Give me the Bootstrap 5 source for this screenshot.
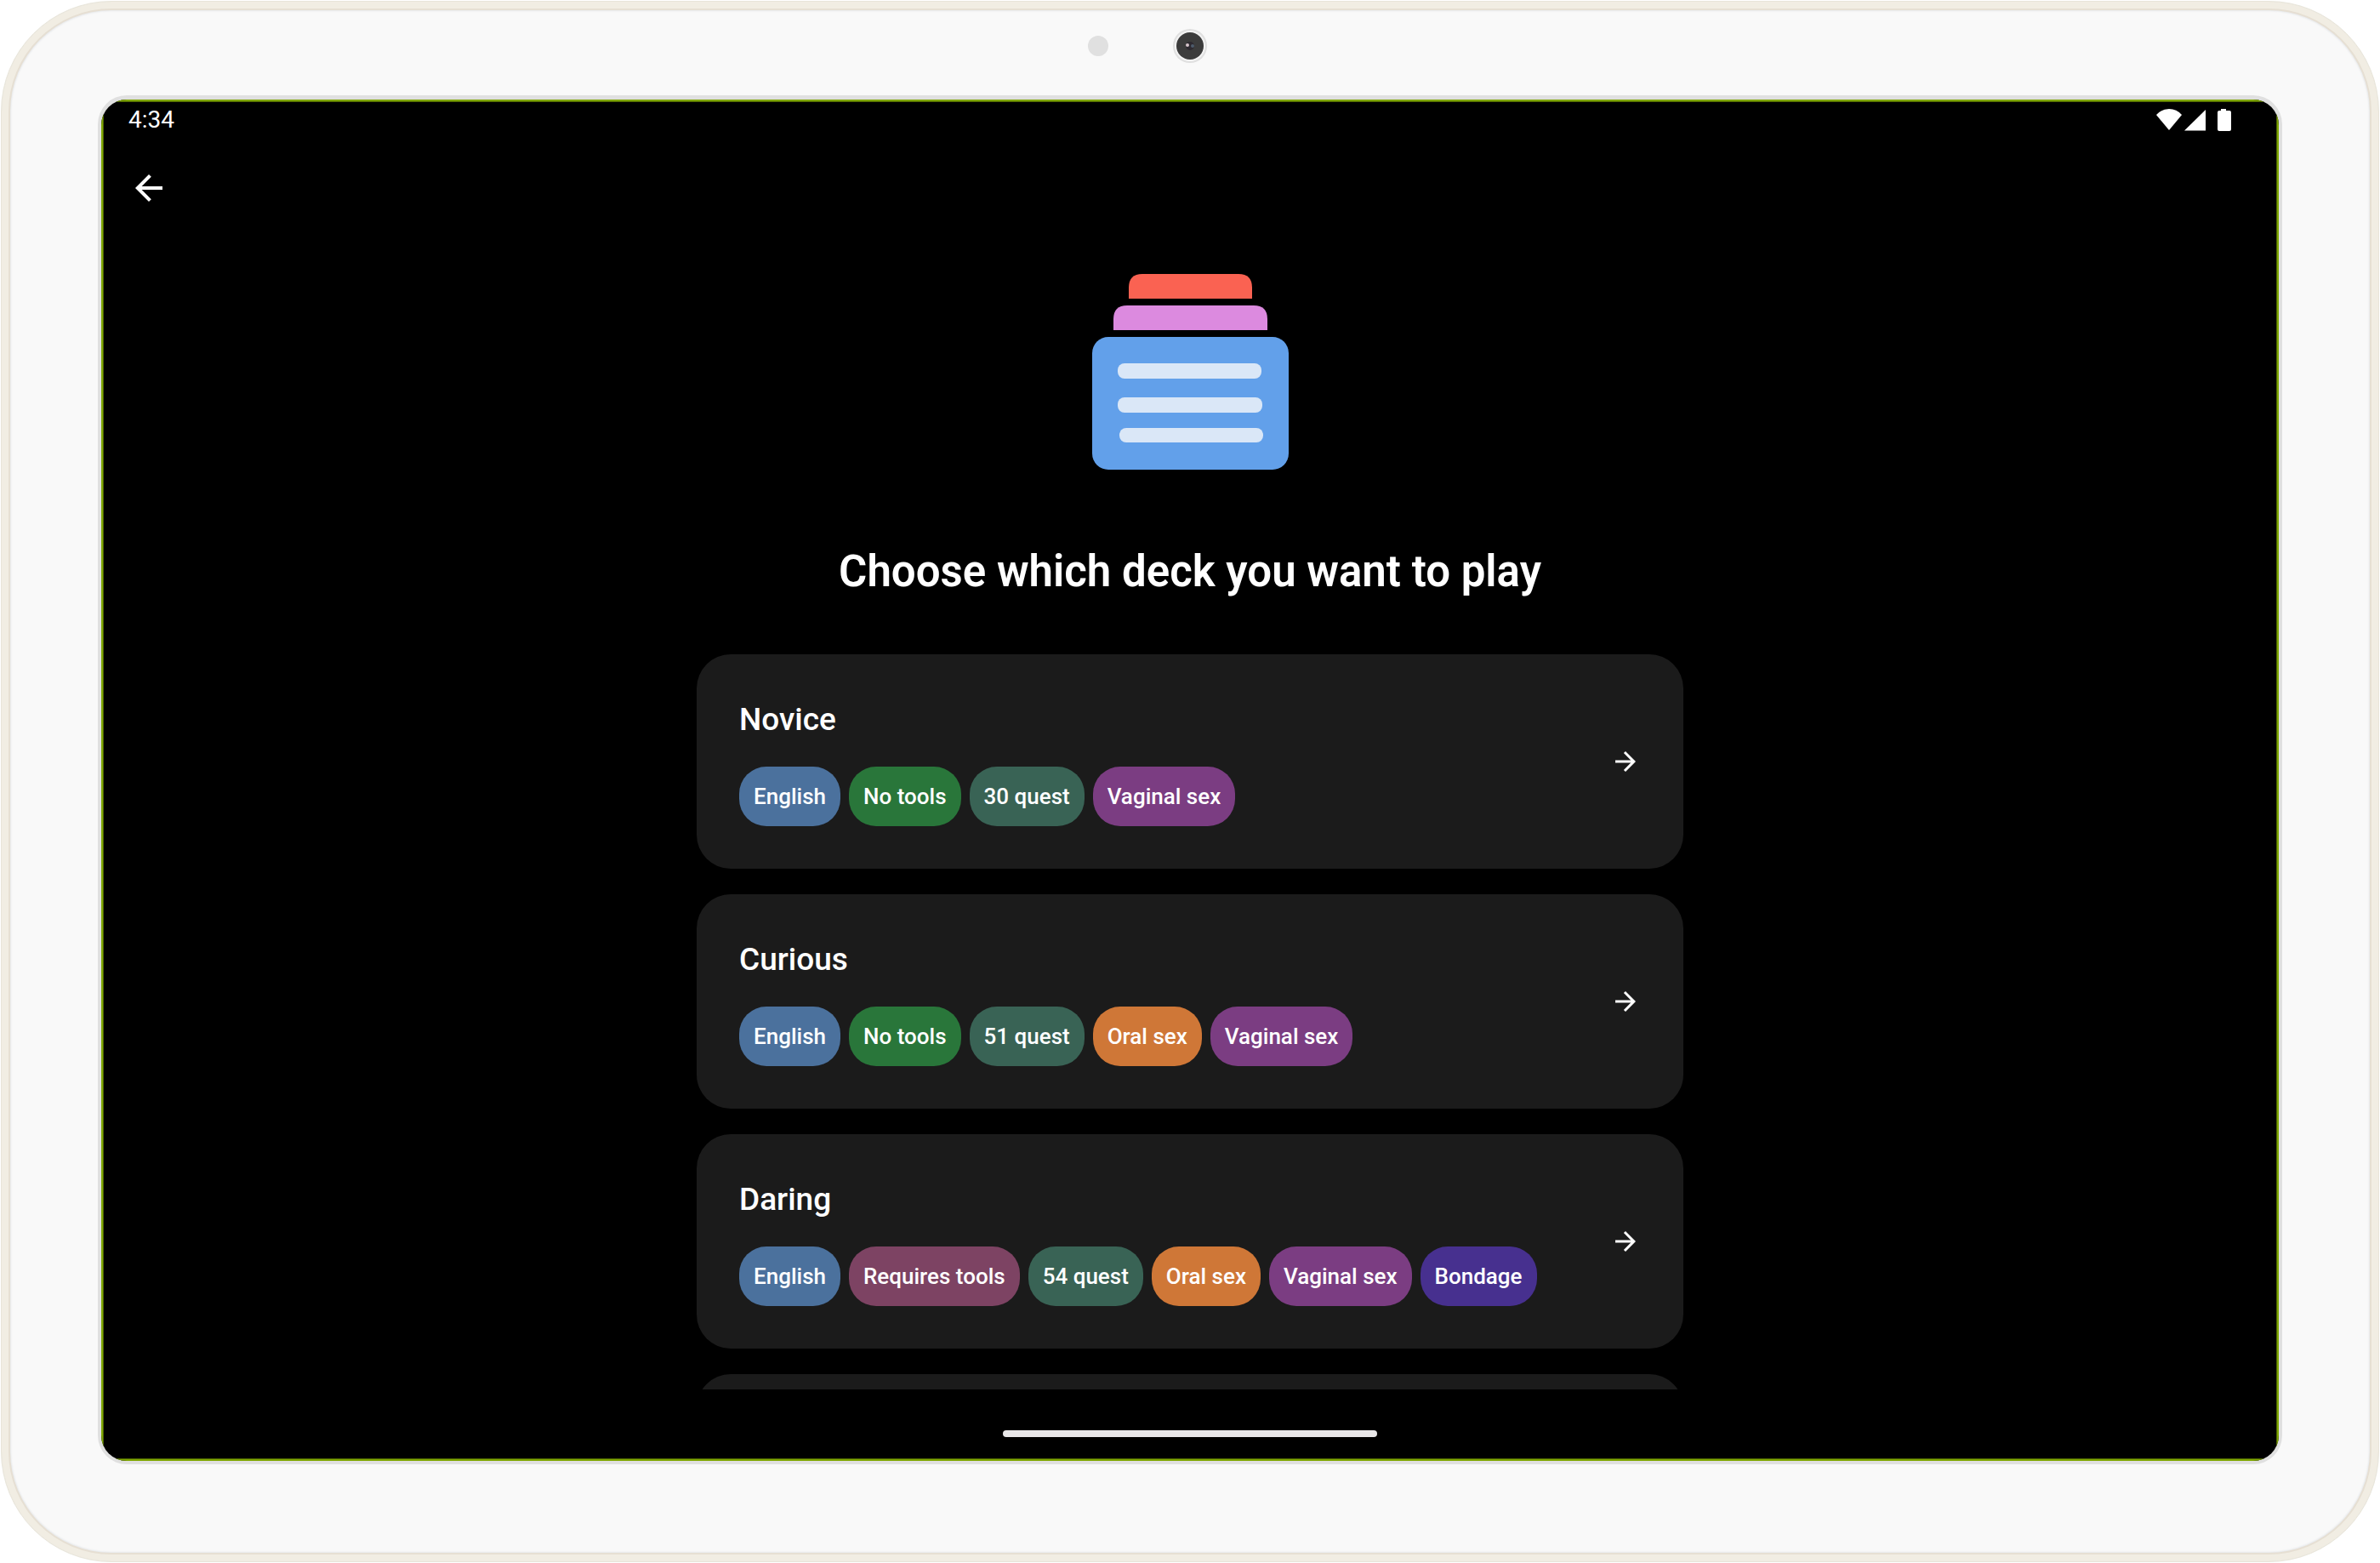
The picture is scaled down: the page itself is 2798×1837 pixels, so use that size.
<!DOCTYPE html>
<html lang="en" data-bs-theme="dark">
<head>
<meta charset="utf-8">
<meta name="viewport" content="width=device-width, initial-scale=1">
<title>Choose a deck</title>
<link href="https://cdn.jsdelivr.net/npm/bootstrap@5.3.0/dist/css/bootstrap.min.css" rel="stylesheet">
<style>
  body { background: #fff; font-family: Roboto, "Noto Sans", sans-serif; }
  .stage { height: 100vh; padding: 1px; }
  /* Tablet shell */
  .device {
    background: #f9f9f9;
    border: 1px solid #e8e5da;
    border-radius: 130px;
    padding: 10px 113px 114px;
    box-shadow: inset 0 0 0 8px #f1ede3, inset 0 0 0 10px #e6dfd3, inset 0 0 2px 11px #e6e8ea;
  }
  .sensors { height: 100px; padding-top: 20px; }
  .bezel { border: 4px solid #e0e0e0; border-top-width: 5px; border-radius: 34px; min-height: 0; background: #e0e0e0; }
  .glass { border-radius: 30px; }
  .viewport-edge { border: 2px solid #7fa600; outline: 1px solid #4c6400; outline-offset: -3px; background: #000; color: #fff; padding: 1px; min-height: 0; }
  /* System bars */
  .status { height: 50px; padding: 0 53px 0 29px; font-size: 28px; line-height: 42px; }
  .home-area { height: 81px; padding-top: 48px; }
  .home-pill { width: 440px; height: 8px; background: #e9e7e8; }
  /* App */
  .app-top { padding: 27px 29px 0; }
  .back { width: 48px; height: 48px; color: #fff; }
  .scroller { min-height: 0; overflow-y: auto; scrollbar-width: none; padding-top: 77px; }
  .scroller::-webkit-scrollbar { display: none; }
  .page-title { font-size: 51px; line-height: 60px; font-weight: 600; margin: 90px 0 67px; }
  .decks { width: 100%; max-width: 1160px; gap: 30px; }
  .deck { background: #1b1b1b; color: #fff; border-radius: 40px; padding: 50px; min-height: 252px; }
  .deck:hover { color: #fff; background: #222; }
  .deck-name { font-size: 37px; line-height: 54px; font-weight: 500; margin-bottom: 28px; }
  .tags { gap: 10px; }
  .tag { font-size: 26px; line-height: 30px; font-weight: 500; padding: 20px 17px; border-radius: 32px; }
  .tag-lang { background: #4b719d; }
  .tag-free { background: #29763a; }
  .tag-tools { background: #7d4363; }
  .tag-count { background: #396355; }
  .tag-oral { background: #cf7737; }
  .tag-vaginal { background: #7b3d82; }
  .tag-bondage { background: #47308f; }
</style>
</head>
<body>
<div class="stage">
  <div class="device h-100 d-flex flex-column">
    <div class="sensors d-flex justify-content-center flex-shrink-0">
      <svg width="260" height="44" viewBox="0 0 260 44" aria-hidden="true">
        <circle cx="22" cy="22" r="12" fill="#e0e0e0"/>
        <circle cx="130" cy="22" r="20" fill="#e0e0e0"/>
        <circle cx="130" cy="22" r="18" fill="#f3f3f3"/>
        <circle cx="130" cy="22" r="16" fill="#3c3c3c"/>
        <circle cx="130" cy="22" r="5" fill="#2e2a31"/>
        <circle cx="133" cy="22" r="2" fill="#4d5b6b"/>
        <circle cx="127" cy="21" r="2" fill="#d5c5cb"/>
      </svg>
    </div>

    <div class="bezel flex-grow-1 d-flex">
      <div class="glass flex-grow-1 d-flex overflow-hidden">
        <div class="viewport-edge flex-grow-1 d-flex flex-column">
          <div class="status d-flex justify-content-between flex-shrink-0">
            <span>4:34</span>
            <svg width="88" height="26" viewBox="0 0 88 26" class="mt-2" fill="#fff" role="img" aria-label="Wi-Fi, signal and battery">
              <path d="M0 7Q6 0 15 0T30 7L15 25Z"/>
              <path d="M33 25.500L58 1V25.500Z"/>
              <path d="M76 0h6v2h4q2 0 2 2v20q0 2-2 2H74q-2 0-2-2V4q0-2 2-2h2z"/>
            </svg>
          </div>

          <header class="app-top flex-shrink-0">
            <button type="button" class="back btn p-0 border-0 d-block" aria-label="Back">
              <svg class="d-block" width="48" height="48" viewBox="0 0 24 24" fill="currentColor"><path d="M20 11H7.830l5.590-5.590L12 4l-8 8 8 8 1.410-1.410L7.830 13H20v-2z"/></svg>
            </button>
          </header>

          <main class="scroller flex-grow-1 d-flex flex-column align-items-center">
            <svg class="flex-shrink-0" width="232" height="230" viewBox="-1 0 232 230" aria-hidden="true">
              <path fill="#fa6252" d="M43 29V16Q43 0 59 0H172Q188 0 188 16V29Z"/>
              <path fill="#dc8adf" d="M25 66V53Q25 37 41 37H190Q206 37 206 53V66Z"/>
              <rect y="74" width="231" height="156" rx="19" fill="#62a0ea"/>
              <g fill="#dae7f7">
                <rect x="30" y="105" width="169" height="18" rx="8"/>
                <rect x="30" y="145" width="170" height="18" rx="8"/>
                <rect x="32" y="181" width="169" height="17" rx="8"/>
              </g>
            </svg>
            <h1 class="page-title text-center flex-shrink-0">Choose which deck you want to play</h1>

            <div class="decks d-flex flex-column flex-shrink-0">
              <a href="#novice" class="deck d-flex align-items-center justify-content-between text-decoration-none">
                <div>
                  <h2 class="deck-name">Novice</h2>
                  <div class="tags d-flex flex-wrap">
                    <span class="tag tag-lang">English</span>
                    <span class="tag tag-free">No tools</span>
                    <span class="tag tag-count">30 quest</span>
                    <span class="tag tag-vaginal">Vaginal sex</span>
                  </div>
                </div>
                <svg class="flex-shrink-0" width="36" height="36" viewBox="0 0 24 24" fill="currentColor" aria-hidden="true"><path d="M12 4l-1.410 1.410L16.170 11H4v2h12.170l-5.580 5.590L12 20l8-8z"/></svg>
              </a>

              <a href="#curious" class="deck d-flex align-items-center justify-content-between text-decoration-none">
                <div>
                  <h2 class="deck-name">Curious</h2>
                  <div class="tags d-flex flex-wrap">
                    <span class="tag tag-lang">English</span>
                    <span class="tag tag-free">No tools</span>
                    <span class="tag tag-count">51 quest</span>
                    <span class="tag tag-oral">Oral sex</span>
                    <span class="tag tag-vaginal">Vaginal sex</span>
                  </div>
                </div>
                <svg class="flex-shrink-0" width="36" height="36" viewBox="0 0 24 24" fill="currentColor" aria-hidden="true"><path d="M12 4l-1.410 1.410L16.170 11H4v2h12.170l-5.580 5.590L12 20l8-8z"/></svg>
              </a>

              <a href="#daring" class="deck d-flex align-items-center justify-content-between text-decoration-none">
                <div>
                  <h2 class="deck-name">Daring</h2>
                  <div class="tags d-flex flex-wrap">
                    <span class="tag tag-lang">English</span>
                    <span class="tag tag-tools">Requires tools</span>
                    <span class="tag tag-count">54 quest</span>
                    <span class="tag tag-oral">Oral sex</span>
                    <span class="tag tag-vaginal">Vaginal sex</span>
                    <span class="tag tag-bondage">Bondage</span>
                  </div>
                </div>
                <svg class="flex-shrink-0" width="36" height="36" viewBox="0 0 24 24" fill="currentColor" aria-hidden="true"><path d="M12 4l-1.410 1.410L16.170 11H4v2h12.170l-5.580 5.590L12 20l8-8z"/></svg>
              </a>

              <div class="deck"></div>
            </div>
          </main>

          <div class="home-area d-flex justify-content-center flex-shrink-0">
            <div class="home-pill rounded-pill"></div>
          </div>
        </div>
      </div>
    </div>
  </div>
</div>
<script src="https://cdn.jsdelivr.net/npm/bootstrap@5.3.0/dist/js/bootstrap.bundle.min.js"></script>
</body>
</html>
